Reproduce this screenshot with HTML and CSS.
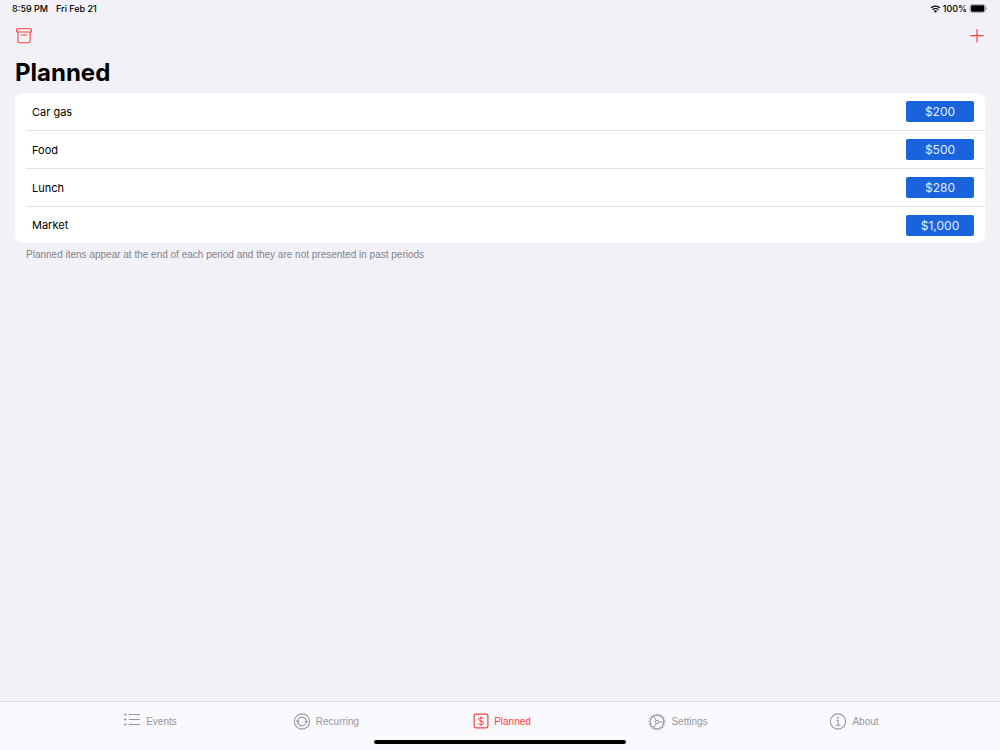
FILE: index.html
```html
<!DOCTYPE html>
<html lang="en">
<head>
  <meta charset="UTF-8">
  <meta name="viewport" content="width=device-width, initial-scale=1.0">
  <title>Planned</title>
  <link rel="stylesheet" href="styles.css">
</head>
<body>
  <div class="status-bar">
    <span>8:59 PM</span>
    <span>Fri Feb 21</span>
    <div class="status-right">
      <svg class="wifi" width="11" height="8" viewBox="0 0 20 16" fill="none" stroke="#000" stroke-width="2.6">
        <path d="M1 5.8a13 13 0 0 1 18 0M4.3 9.4a8.2 8.2 0 0 1 11.4 0"/>
        <path d="M10 15.5l-3.2-3.3a4.6 4.6 0 0 1 6.4 0z" fill="#000" stroke="none"/>
      </svg>
      <span>100%</span>
      <svg class="battery" width="19" height="9" viewBox="0 0 20 10">
        <rect x="0.5" y="0.5" width="17" height="9" rx="2.5" fill="none" stroke="#a5a5a9"/>
        <rect x="1.5" y="1.5" width="15" height="7" rx="1.5"/>
        <path d="M18.5 3.3v3.4a1.8 1.8 0 0 0 0-3.4z" fill="#a5a5a9"/>
      </svg>
    </div>
  </div>

  <header class="nav-bar">
    <button type="button" class="nav-button" aria-label="Archive">
      <svg width="18" height="18" viewBox="0 0 18 18" fill="none" stroke="currentColor" stroke-width="1.1" stroke-linecap="round">
        <rect x="1.6" y="1.8" width="14.8" height="3.2" rx="0.8"/>
        <path d="M2.9 5v9.2a1.6 1.6 0 0 0 1.6 1.6h9a1.6 1.6 0 0 0 1.6-1.6V5M6.4 8h5.2"/>
      </svg>
    </button>
    <button type="button" class="nav-button" aria-label="Add">
      <svg width="18" height="18" viewBox="0 0 18 18" fill="none" stroke="currentColor" stroke-width="1.2" stroke-linecap="round">
        <path d="M9 2.5v12.4M2.8 8.7h12.4"/>
      </svg>
    </button>
  </header>

  <main>
    <h1>Planned</h1>
    <ul class="list">
      <li><span>Car gas</span><span class="amount">$200</span></li>
      <li><span>Food</span><span class="amount">$500</span></li>
      <li><span>Lunch</span><span class="amount">$280</span></li>
      <li><span>Market</span><span class="amount">$1,000</span></li>
    </ul>
    <p class="note">Planned itens appear at the end of each period and they are not presented in past periods</p>
  </main>

  <nav class="tab-bar">
    <a href="#events" class="tab">
      <svg width="18" height="18" viewBox="0 0 18 18" fill="none" stroke="currentColor" stroke-width="1.1">
        <path d="M6 2.5h11M6 7.5h11M6 12.5h11"/>
        <path d="M1 2.5h2.6M1 7.5h2.6M1 12.5h2.6" stroke-width="1.7"/>
      </svg>
      Events
    </a>
    <a href="#recurring" class="tab">
      <svg width="18" height="18" viewBox="0 0 18 18" fill="none" stroke="currentColor" stroke-width="1.1">
        <circle cx="9" cy="9.5" r="7.6"/>
        <path d="M5.3 7.3a4.3 4.3 0 0 1 8 2.2M12.7 11.7a4.3 4.3 0 0 1-8-2.2"/>
        <path d="M11.2 9.2h4.2l-2.1 2.6zM2.6 9.8h4.2L4.7 7.2z" fill="currentColor" stroke="none"/>
      </svg>
      Recurring
    </a>
    <a href="#planned" class="tab active" aria-current="page">
      <svg width="16" height="18" viewBox="0 0 16 18" fill="none" stroke="currentColor" stroke-width="1.2">
        <rect x="1.1" y="2.1" width="13.8" height="13.8" rx="1.8"/>
        <path d="M10.3 7.1c-.2-1-1.1-1.5-2.3-1.5s-2.2.6-2.2 1.6c0 2.5 4.7 1.1 4.7 3.7 0 1-1 1.7-2.4 1.7s-2.4-.6-2.6-1.7M8 4.5v9.1" stroke-width="1"/>
      </svg>
      Planned
    </a>
    <a href="#settings" class="tab">
      <svg width="18" height="20" viewBox="0 0 18 20" fill="none" stroke="currentColor">
        <circle cx="9" cy="11" r="6.8" stroke-width="1.1"/>
        <circle cx="9" cy="11" r="7.9" stroke-width="1.2" stroke-dasharray="1.2 1.558"/>
        <circle cx="9" cy="11" r="1.6"/>
        <path d="M10.6 11h5.2M8.2 9.6L5.6 5.1M8.2 12.4l-2.6 4.5"/>
      </svg>
      Settings
    </a>
    <a href="#about" class="tab">
      <svg width="18" height="18" viewBox="0 0 18 18" fill="none" stroke="currentColor" stroke-width="1.1">
        <circle cx="9" cy="9.5" r="7.6"/>
        <path d="M7.2 8.3h2v4.8M6.8 13.3h4.6"/>
        <circle cx="9" cy="5.8" r="1" fill="currentColor" stroke="none"/>
      </svg>
      About
    </a>
  </nav>
  <div class="home-indicator"></div>
</body>
</html>
```
FILE: styles.css
```css
* { box-sizing: border-box; }
body {
  margin: 0;
  min-height: 100vh;
  display: flex;
  flex-direction: column;
  background-color: #f2f1f7;
  color: #000;
  font-family: Inter, "Liberation Sans", sans-serif;
  font-size: 11px;
}

.status-bar {
  display: flex;
  align-items: center;
  gap: 8px;
  height: 17px;
  padding: 0 12px;
  font-size: 9px;
  font-weight: 500;
}
.status-right { display: flex; align-items: center; gap: 2px; margin-left: auto; }

.nav-bar {
  display: flex;
  justify-content: space-between;
  align-items: center;
  height: 38px;
  padding: 0 14px 0 15px;
}
.nav-button {
  display: flex;
  padding: 0;
  border: 0;
  background: none;
  color: #fe4138;
}

main { flex: 1; padding: 0 15px; }
h1 { margin: 0 0 2px; font-size: 24px; line-height: 36px; font-weight: 700; }

.list {
  margin: 0;
  padding: 0 0 0 11px;
  list-style: none;
  background-color: #fff;
  border-radius: 8px;
}
.list li {
  display: flex;
  justify-content: space-between;
  align-items: center;
  height: 38px;
  padding: 0 11px 0 6px;
  border-bottom: 1px solid #e3e3e5;
}
.list li:last-child { height: 36px; border-bottom: 0; }
.amount {
  width: 68px;
  border-radius: 2px;
  background-color: #1963dd;
  color: #e4edfc;
  font-size: 12px;
  line-height: 21px;
  text-align: center;
}
.note {
  margin: 4px 11px;
  color: #838388;
  font-family: "Liberation Sans", Arial, sans-serif;
  font-size: 10px;
  line-height: 16px;
}

.tab-bar {
  display: flex;
  height: 49px;
  padding: 0 58px 10px 62px;
  border-top: 1px solid #dcdbe0;
  background-color: #faf9fe;
}
.tab {
  flex: 1;
  display: flex;
  justify-content: center;
  align-items: center;
  gap: 5px;
  color: #97979c;
  font-family: "Liberation Sans", Arial, sans-serif;
  font-size: 10px;
  text-decoration: none;
}
.tab.active { color: #fe4138; }

.home-indicator {
  position: fixed;
  bottom: 6px;
  left: 50%;
  width: 252px;
  height: 4px;
  margin-left: -126px;
  border-radius: 2px;
  background-color: #000;
}
```
